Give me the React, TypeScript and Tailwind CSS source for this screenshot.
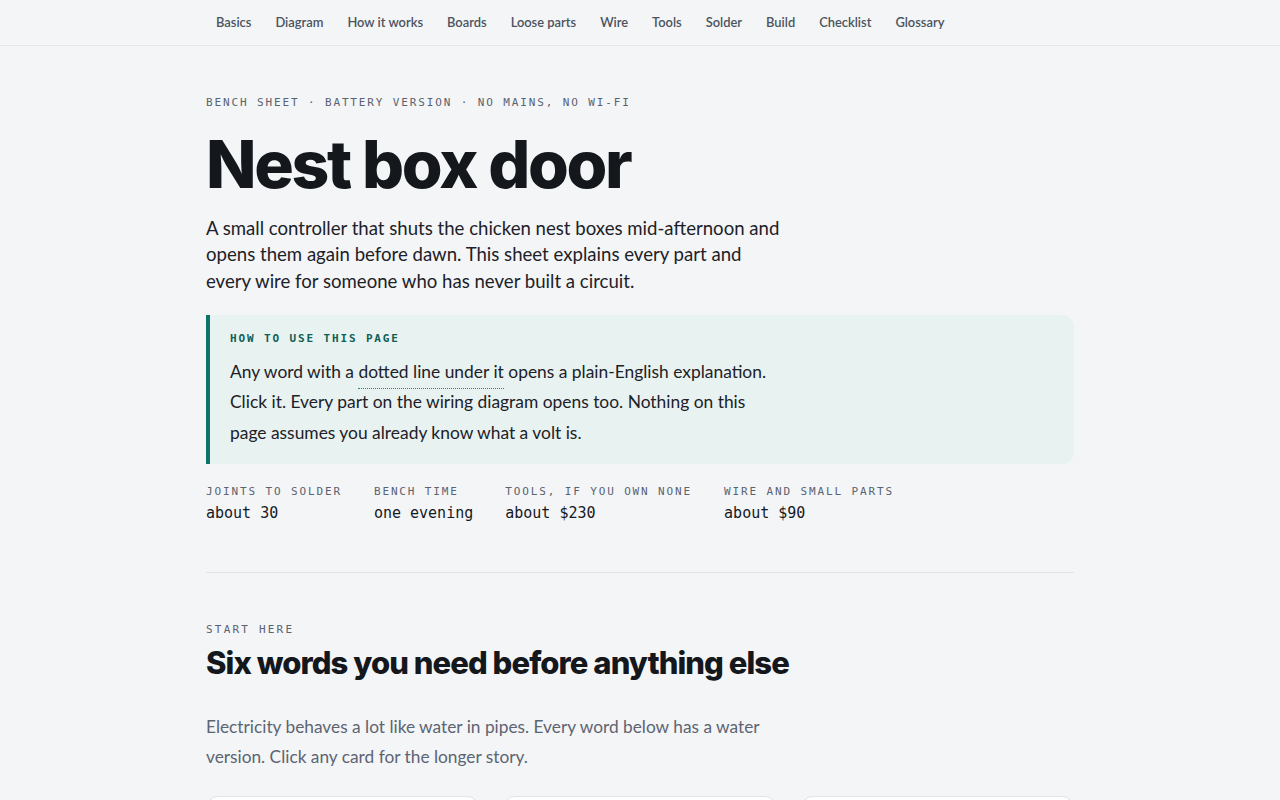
import { useState } from 'react';

const links = ['Basics', 'Diagram', 'How it works', 'Boards', 'Loose parts', 'Wire', 'Tools', 'Solder', 'Build', 'Checklist', 'Glossary'];

const stats = [
    { label: 'Joints to solder', value: 'about 30' },
    { label: 'Bench time', value: 'one evening' },
    { label: 'Tools, if you own none', value: 'about $230' },
    { label: 'Wire and small parts', value: 'about $90' },
];

const sans = "font-['Lato','Noto_Sans',sans-serif]";
const mono = "font-['DejaVu_Sans_Mono','Liberation_Mono',monospace]";
const display = "font-['Inter','Noto_Sans',sans-serif]";

function App() {
    const [open, setOpen] = useState(false);

    return (
        <div className={`min-h-screen bg-[#f3f5f7] text-[#16191f] ${sans}`}>
            <nav className="h-[46px] border-b border-[#e3e6ea] bg-[#f4f5f7]">
                <div className="mx-auto flex h-full max-w-[868px] items-center gap-1">
                    {links.map((l) => (
                        <a key={l} href="#" className="px-2.5 text-[12.9px] font-semibold text-[#4b5360]">
                            {l}
                        </a>
                    ))}
                </div>
            </nav>

            <main className="mx-auto max-w-[868px] pt-[49px]">
                <p className={`${mono} text-[11px] uppercase tracking-[0.17em] text-[#5b6270]`}>
                    Bench sheet · Battery version · No mains, no Wi-Fi
                </p>
                <h1 className={`${display} mt-[12px] text-[66px] font-extrabold leading-[80px] tracking-[-0.035em] text-[#14171c]`}>
                    Nest box door
                </h1>
                <p className="mt-[11px] max-w-[580px] text-[18.6px] leading-[26.5px] text-[#1d2128]">
                    A small controller that shuts the chicken nest boxes mid-afternoon and opens them again before dawn. This sheet explains every part and every wire for someone who has never built a circuit.
                </p>

                {/* how-to callout with the glossary hint */}
                <div className="mt-[21px] rounded-r-xl border-l-4 border-[#0f7468] bg-[#e8f2f1] py-[16px] pl-[20px] pr-6">
                    <p className={`${mono} text-[11px] font-bold uppercase tracking-[0.17em] text-[#0f5f55]`}>How to use this page</p>
                    <p className="mt-[9px] max-w-[545px] text-[17.4px] leading-[30.5px] text-[#1d2128]">
                        Any word with a{' '}
                        <span
                            onClick={() => setOpen(!open)}
                            className="cursor-pointer border-b-[1.5px] border-dotted border-[#1a8d80] pb-[6px]"
                        >
                            dotted line under it
                        </span>{' '}
                        opens a plain-English explanation. Click it. Every part on the wiring diagram opens too. Nothing on this page assumes you already know what a volt is.
                    </p>
                </div>

                <div className="mt-[20px] flex gap-8">
                    {stats.map((s) => (
                        <div key={s.label}>
                            <p className={`${mono} text-[11px] uppercase tracking-[0.17em] text-[#5b6270]`}>{s.label}</p>
                            <p className={`${mono} mt-[1px] text-[15px] text-[#16191f]`}>{s.value}</p>
                        </div>
                    ))}
                </div>

                <hr className="mt-[48px] border-[#e1e4e8]" />

                <p className={`${mono} mt-[49px] text-[11px] uppercase tracking-[0.2em] text-[#5b6270]`}>Start here</p>
                <h2 className={`${display} mt-[5px] text-[31px] font-extrabold leading-[38px] tracking-[-0.03em] text-[#14171c]`}>
                    Six words you need before anything else
                </h2>
                <p className="mt-[30px] max-w-[570px] text-[17.3px] leading-[30px] text-[#5d6472]">
                    Electricity behaves a lot like water in pipes. Every word below has a water version. Click any card for the longer story.
                </p>

                <div className="mt-[24px] grid grid-cols-3 gap-6">
                    {['Voltage', 'Current', 'Resistance'].map((c) => (
                        <div key={c} className="h-[120px] rounded-xl border border-[#e1e4e8] bg-white" />
                    ))}
                </div>
            </main>
        </div>
    );
}

export default App;
